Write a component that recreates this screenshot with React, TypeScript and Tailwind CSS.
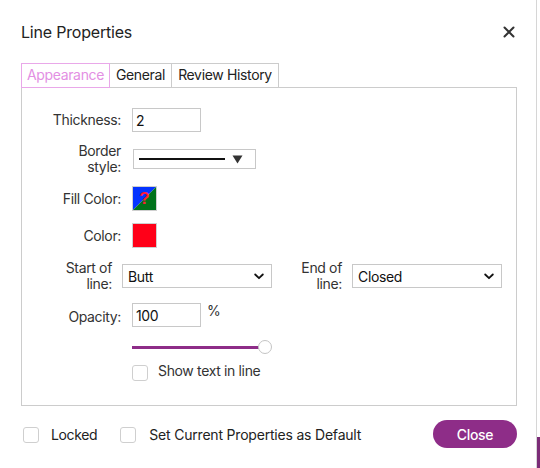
import React from "react";

const font = { fontFamily: "Inter, 'Noto Sans', sans-serif" };

function Chevron() {
  return (
    <svg width="10" height="7" viewBox="0 0 10 7" className="shrink-0">
      <path d="M1.2 1.5 L5 5.2 L8.8 1.5" fill="none" stroke="#111" strokeWidth="1.8" strokeLinecap="round" strokeLinejoin="round" />
    </svg>
  );
}

function FakeSelect({ value, w }: { value: string; w: string }) {
  return (
    <div className={`${w} h-[24px] border border-[#c8c8c8] bg-white flex items-center justify-between pl-[5px] pr-[7px] text-[14px] text-[#111]`}>
      <span>{value}</span>
      <Chevron />
    </div>
  );
}

function Box() {
  return <div className="w-[16px] h-[16px] border border-[#cfcfcf] rounded-[3px] bg-white shrink-0" />;
}

export default function App() {
  return (
    <div className="w-[540px] h-[468px] flex bg-white overflow-hidden tracking-[-0.35px]" style={font}>
      <div className="w-[536px] h-full bg-white rounded-tr-[8px] pl-[21px] text-[#2b2b2b]">
        {/* header */}
        <div className="w-[496px] pt-[22px] h-[42px] flex items-center justify-between">
          <span className="text-[16px] text-[#222] tracking-[-0.2px]">Line Properties</span>
          <svg width="12" height="12" viewBox="0 0 12 12" className="mr-[2px]">
            <path d="M1.5 1.5 L10.5 10.5 M10.5 1.5 L1.5 10.5" stroke="#333" strokeWidth="2" strokeLinecap="round" />
          </svg>
        </div>
        {/* tabs */}
        <div className="mt-[21px] flex h-[25px] text-[14px]">
          <div className="w-[89px] border border-[#e9a8e9] flex items-center justify-center pb-[3px] text-[#e38fe3] relative z-10">Appearance</div>
          <div className="w-[62px] border border-l-0 border-[#cccccc] flex items-center justify-center pb-[3px] text-[#222]">General</div>
          <div className="w-[107px] border border-l-0 border-[#cccccc] flex items-center justify-center pb-[3px] text-[#222]">Review History</div>
        </div>
        {/* panel */}
        <div className="w-[496px] h-[319px] -mt-px border border-[#cccccc] pt-[20px] text-[14px] text-[#333]">
          {/* thickness */}
          <div className="flex items-center h-[24px]">
            <div className="w-[99px] text-right -mt-[1px]">Thickness:</div>
            <div className="ml-[11px] w-[69px] h-[24px] border border-[#c8c8c8] flex items-center pl-[3px] text-[#111]">2</div>
          </div>
          {/* border style */}
          <div className="flex items-center mt-[11px]">
            <div className="w-[99px] text-right leading-[16px]">Border<br />style:</div>
            <div className="ml-[12px] w-[123px] h-[20px] border border-[#c8c8c8] flex items-center pl-[5px] pr-[12px] justify-between">
              <div className="w-[86px] h-[1.5px] bg-[#111]" />
              <svg width="11" height="9" viewBox="0 0 11 9"><path d="M0.5 0.5 H10.5 L5.5 8.5 Z" fill="#333" /></svg>
            </div>
          </div>
          {/* fill color */}
          <div className="flex items-center mt-[11px] h-[25px]">
            <div className="w-[99px] text-right">Fill Color:</div>
            <div className="ml-[11px] w-[25px] h-[25px] border border-[#cfcfcf] relative overflow-hidden">
              <svg width="23" height="23" viewBox="0 0 23 23" className="absolute inset-0">
                <polygon points="0,0 23,0 0,23" fill="#0433ff" />
                <polygon points="23,0 23,23 0,23" fill="#00721b" />
              </svg>
              <span className="absolute inset-0 flex items-center justify-center text-[#ff1a3a] text-[17px] font-bold leading-none tracking-normal" style={{ fontFamily: "'Liberation Sans', sans-serif" }}>?</span>
            </div>
          </div>
          {/* color */}
          <div className="flex items-center mt-[12px] h-[25px]">
            <div className="w-[99px] text-right">Color:</div>
            <div className="ml-[11px] w-[25px] h-[25px] border border-[#cfcfcf] bg-[#ff0018]" />
          </div>
          {/* start / end of line */}
          <div className="flex items-center mt-[12px]">
            <div className="w-[90px] text-right leading-[16px]">Start of<br />line:</div>
            <div className="ml-[10px]"><FakeSelect value="Butt" w="w-[150px]" /></div>
            <div className="ml-[28px] w-[42px] text-right leading-[16px]">End of<br />line:</div>
            <div className="ml-[10px]"><FakeSelect value="Closed" w="w-[150px]" /></div>
          </div>
          {/* opacity */}
          <div className="flex items-start mt-[11px]">
            <div className="w-[99px] text-right h-[24px] flex items-center justify-end pt-[2px]">Opacity:</div>
            <div className="ml-[11px] w-[69px] h-[24px] border border-[#c8c8c8] flex items-center pl-[3px] text-[#111]">100</div>
            <div className="ml-[6px] -mt-[3px]">%</div>
          </div>
          {/* slider */}
          <div className="flex items-center mt-[13px] ml-[110px] h-[14px]">
            <div className="w-[127px] h-[3px] bg-[#8e2d88]" />
            <div className="w-[14px] h-[14px] rounded-full border border-[#c4c4c4] bg-white -ml-[1px]" />
          </div>
          {/* show text */}
          <div className="flex items-start mt-[11px] ml-[110px]">
            <Box />
            <span className="ml-[10px] -mt-[5px]">Show text in line</span>
          </div>
        </div>
        {/* footer */}
        <div className="w-[496px] mt-[14px] h-[28px] flex items-center text-[14px] text-[#222]">
          <div className="ml-[2px] mt-[1px]"><Box /></div>
          <span className="ml-[12px]">Locked</span>
          <div className="ml-[23px] mt-[1px]"><Box /></div>
          <span className="ml-[13px] tracking-[-0.2px]">Set Current Properties as Default</span>
          <div className="ml-auto w-[84px] h-[28px] rounded-full bg-[#8e2d88] text-white flex items-center justify-center font-medium text-[14px]">Close</div>
        </div>
      </div>
      <div className="w-[4px] h-full flex">
        <div className="w-[1px] h-full bg-[#d6d6d6]" />
        <div className="w-[3px] h-full flex flex-col">
          <div className="h-[437px] bg-white" />
          <div className="flex-1 bg-[#7b2c77]" />
        </div>
      </div>
    </div>
  );
}
